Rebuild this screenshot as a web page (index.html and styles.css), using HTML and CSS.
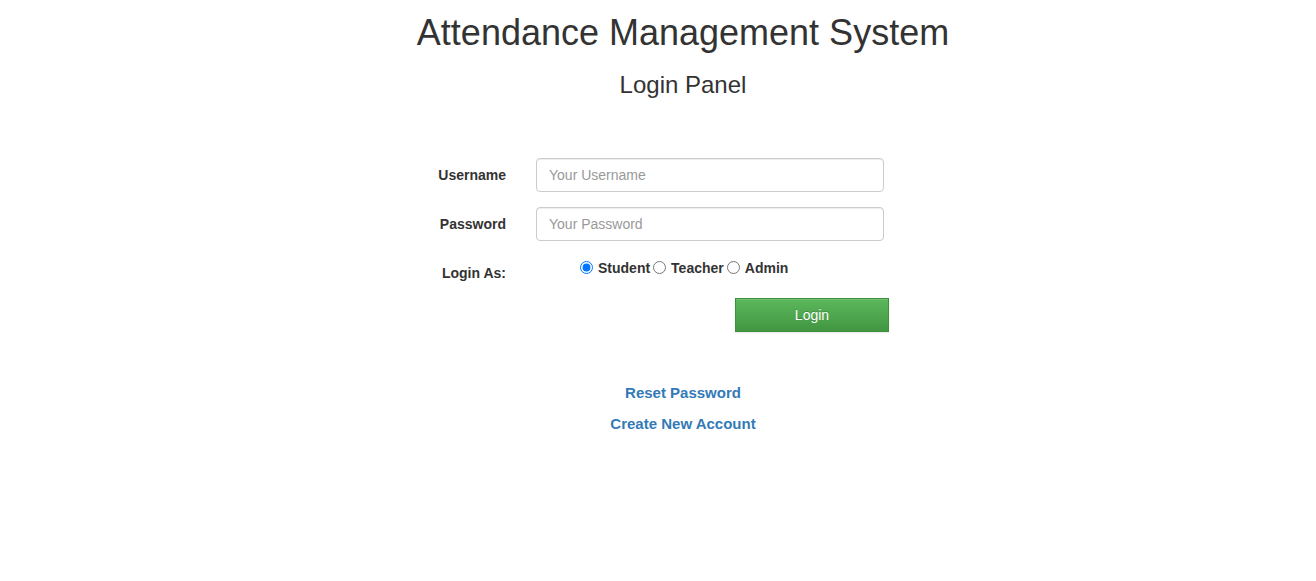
FILE: index.html
```html
<!DOCTYPE html>
<html>
<head>
<meta charset="utf-8">
<title>Attendance Management System</title>
<link rel="stylesheet" href="styles.css">
</head>
<body>
<div class="page">
  <h1 class="title">Attendance Management System</h1>
  <h3 class="subtitle">Login Panel</h3>

  <form class="login-form">
    <div class="form-group">
      <label class="form-label" for="username">Username</label>
      <input class="form-control" id="username" type="text" placeholder="Your Username">
    </div>
    <div class="form-group">
      <label class="form-label" for="password">Password</label>
      <input class="form-control" id="password" type="password" placeholder="Your Password">
    </div>
    <div class="form-group">
      <label class="form-label form-label-as">Login As:</label>
      <div class="radio-row">
        <input type="radio" name="type" checked><span class="radio-text">Student</span><input type="radio" name="type"><span class="radio-text">Teacher</span><input type="radio" name="type"><span class="radio-text">Admin</span>
      </div>
    </div>
    <div class="form-group button-row">
      <span></span>
      <div><button type="button" class="btn-login">Login</button></div>
    </div>
  </form>

  <div class="links">
    <a href="#" class="link">Reset Password</a>
    <a href="#" class="link">Create New Account</a>
  </div>

  <div class="watermark">Activate Windows</div>
</div>
</body>
</html>
```

FILE: styles.css
```css
html, body {
  margin: 0;
  padding: 0;
  background: #fff;
  overflow: hidden;
}

body {
  font-family: "Liberation Sans", Arial, Helvetica, sans-serif;
  font-size: 14px;
  line-height: 20px;
  color: #333;
}

.page {
  width: 1366px;
  height: 581px;
  position: relative;
}

.title {
  margin: 13px 0 0;
  font-size: 36px;
  font-weight: 400;
  line-height: 1.1;
  text-align: center;
  color: #333;
}

.subtitle {
  margin: 19px 0 0;
  font-size: 24px;
  font-weight: 400;
  line-height: 1.1;
  text-align: center;
  color: #333;
}

.login-form {
  margin: 60px 0 0 406px;
  width: 478px;
}

.form-group {
  display: grid;
  grid-template-columns: 100px 348px;
  column-gap: 30px;
  margin-bottom: 15px;
}

.form-label {
  text-align: right;
  font-weight: 700;
  padding-top: 7px;
  line-height: 20px;
}

.form-label-as {
  padding-bottom: 7px;
}

.form-control {
  box-sizing: border-box;
  width: 348px;
  height: 34px;
  padding: 6px 12px;
  font-family: inherit;
  font-size: 14px;
  line-height: 20px;
  color: #555;
  background: #fff;
  border: 1px solid #ccc;
  border-radius: 4px;
  box-shadow: inset 0 1px 1px rgba(0, 0, 0, .075);
  margin: 0;
}

.form-control::placeholder {
  color: #999;
}

.radio-row {
  padding-top: 2px;
  padding-left: 41px;
  font-weight: 700;
  white-space: nowrap;
}

.radio-row input {
  margin: 3px 5px 0 3px;
  width: 13px;
  height: 13px;
  vertical-align: -1px;
}

.button-row {
  margin-top: -7px;
}

.btn-login {
  margin-left: 199px;
  width: 154px;
  height: 34px;
  border: 1px solid #3e8f3e;
  border-radius: 0;
  background: linear-gradient(to bottom, #5cb85c 0, #419641 100%);
  color: #fff;
  font-family: inherit;
  font-size: 14px;
  line-height: 20px;
  padding: 6px 12px;
  text-shadow: 0 -1px 0 rgba(0, 0, 0, .2);
  box-shadow: inset 0 1px 0 rgba(255, 255, 255, .15), 0 1px 1px rgba(0, 0, 0, .075);
}

.links {
  margin-top: 51px;
  display: flex;
  flex-direction: column;
  align-items: center;
  gap: 11px;
}

.link {
  color: #337ab7;
  font-size: 15px;
  font-weight: 700;
  text-decoration: none;
  line-height: 20px;
}

.watermark {
  position: absolute;
  left: 1075px;
  top: 570px;
  font-family: "Open Sans", "Liberation Sans", sans-serif;
  font-size: 22px;
  line-height: 28px;
  color: rgba(160, 160, 160, 0.6);
  white-space: nowrap;
}
```
